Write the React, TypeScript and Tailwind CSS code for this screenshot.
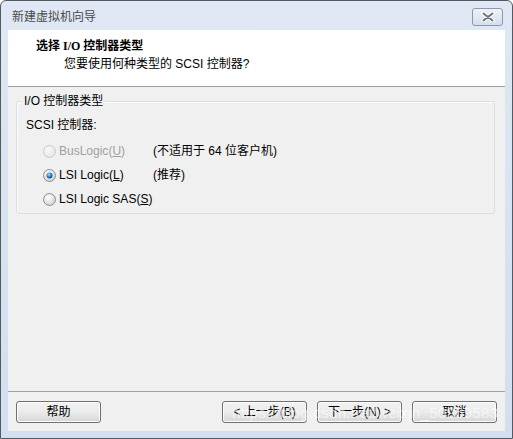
import { ReactNode } from 'react';

const font = { fontFamily: '"Liberation Sans", "Noto Sans CJK SC", sans-serif' };

function Radio({ checked, disabled }: { checked?: boolean; disabled?: boolean }) {
  return (
    <svg width="13" height="13" viewBox="0 0 13 13" className="shrink-0">
      <defs>
        <radialGradient id={checked ? 'rgc' : disabled ? 'rgd' : 'rgn'} cx="40%" cy="35%" r="70%">
          <stop offset="0%" stopColor={disabled ? '#f7f7f7' : '#ffffff'} />
          <stop offset="100%" stopColor={disabled ? '#e6e6e6' : '#cfcfcf'} />
        </radialGradient>
        <radialGradient id="dot" cx="40%" cy="35%" r="70%">
          <stop offset="0%" stopColor="#9fdcff" />
          <stop offset="60%" stopColor="#1e7dc2" />
          <stop offset="100%" stopColor="#0b3f78" />
        </radialGradient>
      </defs>
      <circle cx="6.5" cy="6.5" r="6" fill={`url(#${checked ? 'rgc' : disabled ? 'rgd' : 'rgn'})`} stroke={disabled ? '#c8c8c8' : '#8e8f8f'} strokeWidth="1" />
      {checked && <circle cx="6.5" cy="6.5" r="3" fill="url(#dot)" />}
    </svg>
  );
}

function Btn({ children }: { children: ReactNode }) {
  return (
    <button className="w-[85px] h-[22px] rounded-[3px] border border-[#707070] bg-gradient-to-b from-[#f2f2f2] via-[#ebebeb] to-[#d6d6d6] text-[12px] text-black flex items-center justify-center shadow-[inset_0_0_0_1px_#fcfcfc]">
      {children}
    </button>
  );
}

function Row({ label, mn, tail, note, checked, disabled }: { label: string; mn: string; tail?: string; note?: string; checked?: boolean; disabled?: boolean }) {
  return (
    <div className="h-[24px] flex items-center pl-[26px]">
      <Radio checked={checked} disabled={disabled} />
      <span className={`ml-[3px] w-[94px] ${disabled ? 'text-[#a0a0a0]' : 'text-black'}`}>
        {label}(<span className="underline">{mn}</span>){tail}
      </span>
      {note && <span className="text-black">{note}</span>}
    </div>
  );
}

export default function App() {
  return (
    <div className="w-[513px] h-[439px] relative overflow-hidden" style={font}>
      <div className="w-full h-full flex flex-col border border-[#555a60] rounded-t-[6px] bg-gradient-to-b from-[#dfe8f4] via-[#d8e3f1] to-[#d3dff0] text-[12px]">
        {/* Title bar */}
        <div className="h-[29px] flex items-center justify-between pl-[11px] pr-[9px]">
          <span className="text-[#4a4a4a] text-[12px] pt-[2px]">新建虚拟机向导</span>
          <div className="w-[31px] h-[18px] mt-[2px] rounded-[3px] border border-[#8c99ab] bg-gradient-to-b from-[#eef2f8] to-[#d5dfec] flex items-center justify-center">
            <svg width="14" height="10" viewBox="0 0 14 10">
              <path d="M2 1 L12 9 M12 1 L2 9" stroke="#ffffff" strokeWidth="4" strokeLinecap="round" />
              <path d="M2.5 1.5 L11.5 8.5 M11.5 1.5 L2.5 8.5" stroke="#6a7482" strokeWidth="2" strokeLinecap="round" />
            </svg>
          </div>
        </div>

        {/* Client area */}
        <div className="mx-[7px] h-[401px] bg-[#f0f0f0] flex flex-col">
          <div className="h-[57px] bg-white border-b border-[#a0a0a0] pt-[8px]">
            <div className="pl-[28px] h-[16px] flex items-center font-bold text-black text-[12px]" style={{ fontFamily: '"Liberation Serif", "Noto Sans CJK SC", serif' }}>
              选择 I/O 控制器类型
            </div>
            <div className="pl-[56px] mt-[2px] h-[16px] flex items-center text-black">
              您要使用何种类型的 SCSI 控制器?
            </div>
          </div>

          <div className="flex-1 flex flex-col">
            <div className="mt-[14px] ml-[8px] mr-[10px] h-[113px] relative border border-[#d5dfe5] rounded-[3px] shadow-[inset_1px_1px_0_#ffffff]">
              <span className="absolute -top-[9px] left-[5px] px-[2px] bg-[#f0f0f0] leading-[16px] text-black">I/O 控制器类型</span>
              <div className="pt-[15px] pl-[9px] h-[16px] leading-[16px] text-black box-content">SCSI 控制器:</div>
              <div className="mt-[6px] flex flex-col">
                <Row label="BusLogic" mn="U" note="(不适用于 64 位客户机)" disabled />
                <Row label="LSI Logic" mn="L" note="(推荐)" checked />
                <Row label="LSI Logic SAS" mn="S" />
              </div>
            </div>
            <div className="flex-1" />
            <div className="border-t border-[#a0a0a0] h-[40px] flex items-start pt-[9px] px-[8px]">
              <Btn>帮助</Btn>
              <div className="flex-1" />
              <div className="flex gap-[10px]">
                <Btn>&lt; 上一步(B)</Btn>
                <Btn>下一步(N) &gt;</Btn>
                <Btn>取消</Btn>
              </div>
            </div>
          </div>
        </div>
      </div>
      <span className="absolute left-[232px] top-[402px] text-[15px] tracking-[0.3px] text-white/60 pointer-events-none whitespace-nowrap" style={{ fontFamily: '"Liberation Sans", sans-serif' }}>
        https://blog.csdn.net/weixin_50969583
      </span>
    </div>
  );
}
